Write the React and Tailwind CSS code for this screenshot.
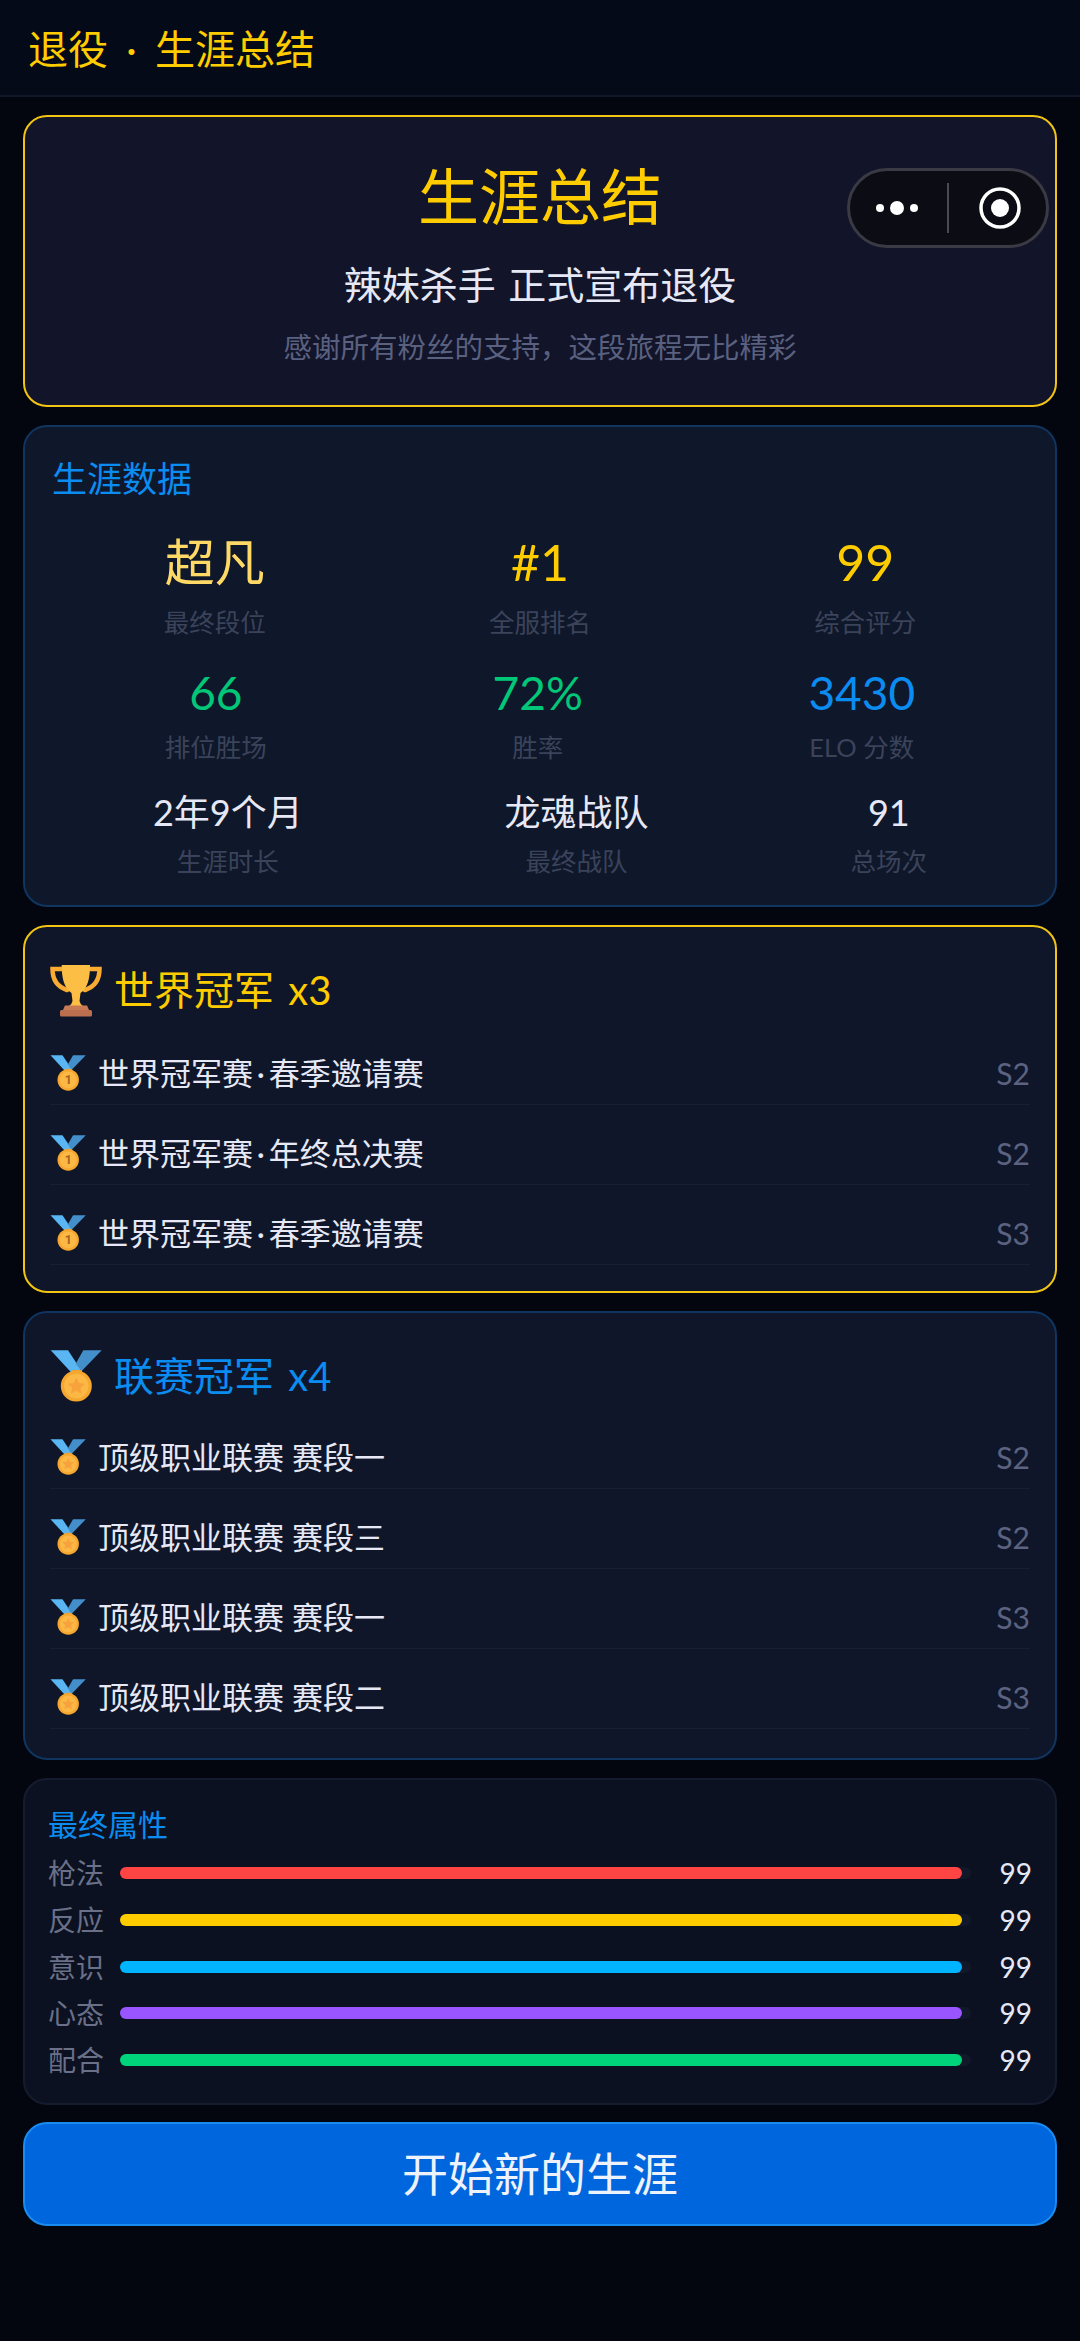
import React from "react";

function Medal({ size = 36, one = false }) {
  return (
    <svg width={size} height={size} viewBox="0 0 52 52" className="shrink-0">
      <path d="M0.7 0.3H18L31.7 21L21.7 23Z" fill="#59b6f2" />
      <path d="M51.7 0.3H33.3L25.7 13.7L31.7 21Z" fill="#438fca" />
      <path d="M21 20H32V26H21Z" fill="#e8a02e" />
      <circle cx="26.3" cy="36" r="15.5" fill="#f6a72f" />
      <circle cx="26.3" cy="36" r="12.2" fill="#fcb845" />
      {one ? (
        <text x="26.3" y="42.5" textAnchor="middle" fontSize="18" fontWeight="700" fill="#a8641e" fontFamily="Roboto, sans-serif">1</text>
      ) : (
        <path d="M26.3 27.5L28.9 33L34.8 33.7L30.5 37.8L31.6 43.7L26.3 40.8L21 43.7L22.1 37.8L17.8 33.7L23.7 33Z" fill="#f8a23c" />
      )}
    </svg>
  );
}

function Trophy() {
  return (
    <svg width="52" height="53" viewBox="0 0 52 53" className="shrink-0">
      <path d="M12 5H2.5C2.5 16 8 23 17 26" fill="none" stroke="#f9ab32" strokeWidth="4.5" strokeLinecap="round" />
      <path d="M40 5H49.5C49.5 16 44 23 35 26" fill="none" stroke="#f9ab32" strokeWidth="4.5" strokeLinecap="round" />
      <path d="M11.7 1H40C40 14 38 24 30.5 29L29.5 37Q30 40 33 42H19Q22 40 22.5 37L21.5 29C14 24 11.7 14 11.7 1Z" fill="#fdbe45" />
      <path d="M15 41.5H37L39 46H13Z" fill="#c77a54" />
      <rect x="10" y="46" width="32" height="6.5" rx="1.5" fill="#bc6f4f" />
    </svg>
  );
}

function Stat({ value, label, size, color, gap }) {
  return (
    <div className="flex flex-col items-center text-center">
      <div className={`${size} whitespace-nowrap ${color}`}>{value}</div>
      <div className={`${gap} whitespace-nowrap text-[25.5px] leading-[36px] text-[#3b435a]`}>{label}</div>
    </div>
  );
}

function Row({ one, name, season }) {
  return (
    <div className="mb-[17px] flex h-[63px] items-center border-b border-[#ffffff0a] pb-px">
      <Medal one={one} />
      <div className="ml-[12px] flex-1 whitespace-pre text-[31px] leading-[32px] text-[#e6e9f5]">{name}</div>
      <div className="text-[30px] leading-[32px] text-[#5b6380]">{season}</div>
    </div>
  );
}

function Attr({ label, color }) {
  return (
    <div className="flex h-[46.7px] items-center">
      <div className="w-[72px] whitespace-nowrap text-[28px] leading-[42px] text-[#6a7088]">{label}</div>
      <div className="h-[12px] w-[851px] rounded-full bg-[#111829]">
        <div className={`h-full w-[99%] rounded-full ${color}`} />
      </div>
      <div className="flex-1 text-right text-[28px] leading-[42px] text-[#e6e9f5]">99</div>
    </div>
  );
}

export default function App() {
  return (
    <div
      className="flex min-h-[2341px] w-full flex-col bg-[#03060f] text-white"
      style={{ fontFamily: 'Lato, "Noto Sans CJK SC", sans-serif' }}
    >
      <header className="flex h-[97px] items-center border-b-2 border-[#10172a] bg-[#050a18] pl-[28px] pt-[2px]">
        <div className="whitespace-pre text-[40px] leading-[50px] text-[#ffcc00] [word-spacing:8px]">退役 · 生涯总结</div>
      </header>

      <main className="flex flex-col gap-[18px] px-[23px] pt-[18px]">
        <section className="relative h-[292px] rounded-[24px] border-2 border-[#f2c413] bg-[#12142a] pt-[44px] text-center">
          <div className="text-[61px] leading-[72px] text-[#ffcc00]">生涯总结</div>
          <div className="mt-[21px] text-[38px] leading-[60px] text-[#e6e9f5] [word-spacing:3px]">辣妹杀手 正式宣布退役</div>
          <div className="mt-[13px] text-[28.5px] leading-[40px] text-[#5a6180]">感谢所有粉丝的支持，这段旅程无比精彩</div>
          <div className="absolute right-[6px] top-[51px] flex h-[80px] w-[202px] items-center rounded-full border-[3px] border-[#3a3a44] bg-[#0c0c14]">
            <svg width="202" height="80" viewBox="0 0 202 80" className="-m-[3px] shrink-0">
              <circle cx="33" cy="40" r="4" fill="#fff" />
              <circle cx="50" cy="40" r="7" fill="#fff" />
              <circle cx="67" cy="40" r="4" fill="#fff" />
              <rect x="100" y="15" width="2" height="50" fill="#4a4a52" />
              <circle cx="153" cy="40" r="19" fill="none" stroke="#fff" strokeWidth="3.5" />
              <circle cx="153" cy="40" r="9" fill="#fff" />
            </svg>
          </div>
        </section>

        <section className="flex flex-col rounded-[24px] border-2 border-[#0f3560] bg-[#0f172a] px-[27px] pb-[26px] pt-[26px]">
          <div className="text-[35px] leading-[50px] text-[#0a8cf0]">生涯数据</div>
          <div className="mt-[29px] flex justify-around">
            <Stat gap="mt-[12px]" value="超凡" label="最终段位" size="text-[50px] leading-[60px]" color="text-[#ffd966]" />
            <Stat gap="mt-[12px]" value="#1" label="全服排名" size="text-[50px] leading-[60px]" color="text-[#ffcc00]" />
            <Stat gap="mt-[12px]" value="99" label="综合评分" size="text-[50px] leading-[60px]" color="text-[#ffcc00]" />
          </div>
          <div className="mt-[25px] flex justify-around">
            <Stat gap="mt-[8px]" value="66" label="排位胜场" size="text-[46px] leading-[56px]" color="text-[#00c878]" />
            <Stat gap="mt-[8px]" value="72%" label="胜率" size="text-[46px] leading-[56px]" color="text-[#00c878]" />
            <Stat gap="mt-[8px]" value="3430" label="ELO 分数" size="text-[46px] leading-[56px]" color="text-[#0a8cf0]" />
          </div>
          <div className="mt-[22px] flex justify-around">
            <Stat gap="mt-[6px]" value="2年9个月" label="生涯时长" size="text-[36px] leading-[50px]" color="text-[#e6e9f5]" />
            <Stat gap="mt-[6px]" value="龙魂战队" label="最终战队" size="text-[36px] leading-[50px]" color="text-[#e6e9f5]" />
            <Stat gap="mt-[6px]" value="91" label="总场次" size="text-[36px] leading-[50px]" color="text-[#e6e9f5]" />
          </div>
        </section>

        <section className="flex flex-col rounded-[24px] border-2 border-[#f2c413] bg-[#10162a] px-[25px] pb-[9px] pt-[35px]">
          <div className="flex h-[56px] items-center">
            <Trophy />
            <div className="ml-[12px] whitespace-pre text-[40px] leading-[56px] text-[#ffcc00] [word-spacing:4px]">世界冠军 x3</div>
          </div>
          <div className="mt-[24px] flex flex-col">
            <Row one name={"世界冠军赛\u2009·\u2009春季邀请赛"} season="S2" />
            <Row one name={"世界冠军赛\u2009·\u2009年终总决赛"} season="S2" />
            <Row one name={"世界冠军赛\u2009·\u2009春季邀请赛"} season="S3" />
          </div>
        </section>

        <section className="flex flex-col rounded-[24px] border-2 border-[#0f3560] bg-[#10162a] px-[25px] pb-[12px] pt-[35px]">
          <div className="flex h-[56px] items-center">
            <Medal size={52} />
            <div className="ml-[12px] whitespace-pre text-[40px] leading-[56px] text-[#0a8cf0] [word-spacing:4px]">联赛冠军 x4</div>
          </div>
          <div className="mt-[22px] flex flex-col">
            <Row name="顶级职业联赛 赛段一" season="S2" />
            <Row name="顶级职业联赛 赛段三" season="S2" />
            <Row name="顶级职业联赛 赛段一" season="S3" />
            <Row name="顶级职业联赛 赛段二" season="S3" />
          </div>
        </section>

        <section className="flex flex-col rounded-[24px] border-2 border-[#161c30] bg-[#0b1120] px-[23px] pb-[20px] pt-[24px]">
          <div className="mb-[6px] text-[30px] leading-[40px] text-[#0a8cf0]">最终属性</div>
          <Attr label="枪法" color="bg-[#ff4444]" />
          <Attr label="反应" color="bg-[#ffcc00]" />
          <Attr label="意识" color="bg-[#00b4ff]" />
          <Attr label="心态" color="bg-[#9955ff]" />
          <Attr label="配合" color="bg-[#00d47a]" />
        </section>

        <button className="-mt-[1px] flex h-[104px] items-center justify-center rounded-[24px] border-2 border-[#1a8cf0] bg-[#0066dd] text-[46px] leading-[60px] text-[#eef2fb]">
          开始新的生涯
        </button>
      </main>
    </div>
  );
}
